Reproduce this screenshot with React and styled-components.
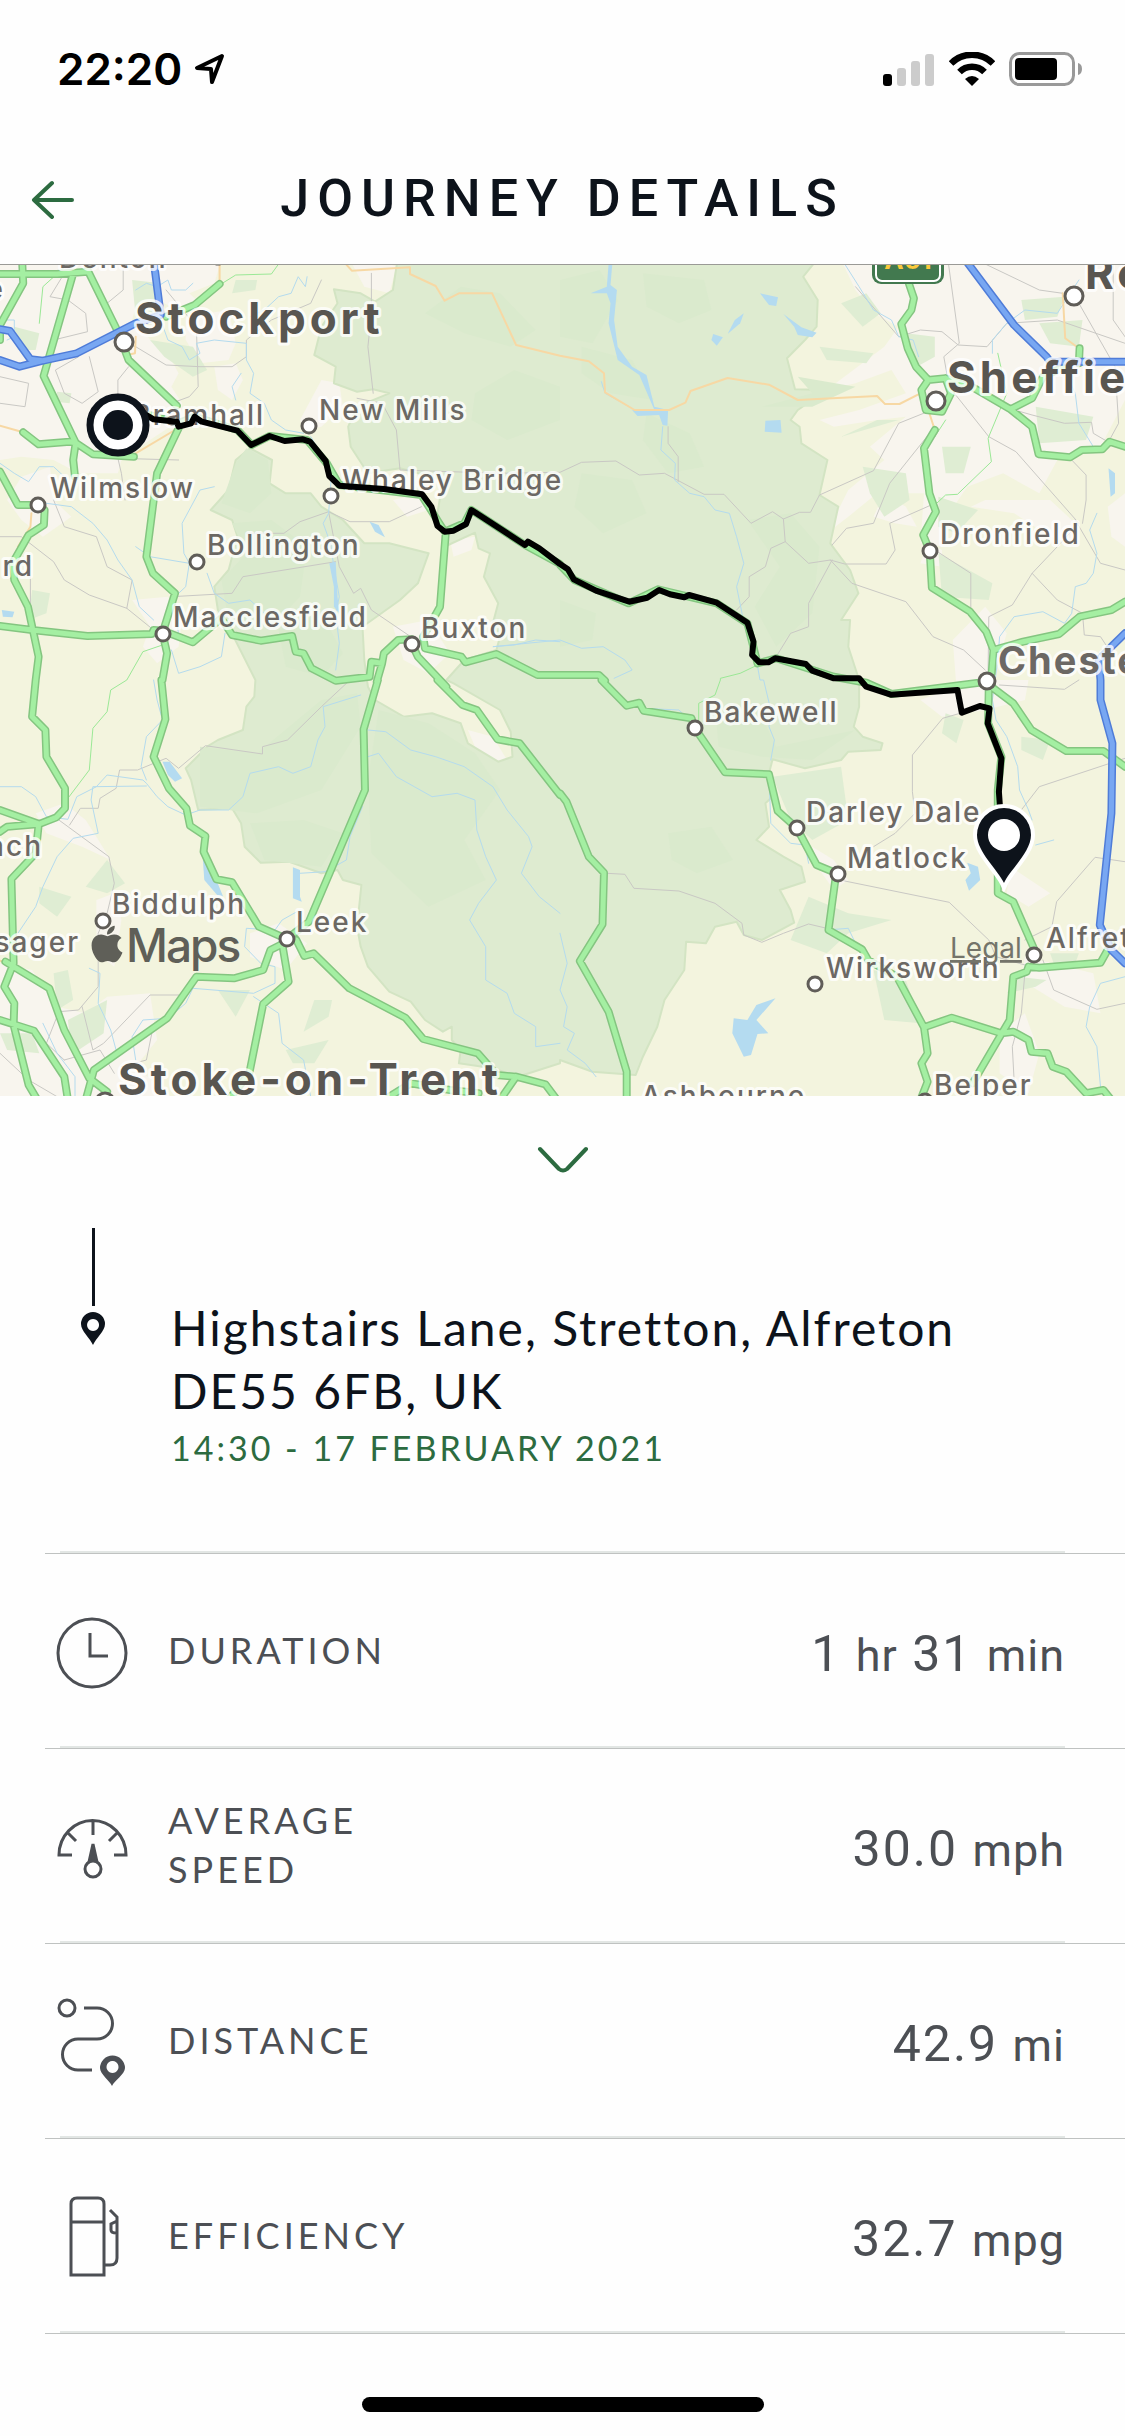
import React from 'react';
import styled, { createGlobalStyle } from 'styled-components';
import { FaApple } from 'react-icons/fa';

const color = {
  page: '#fefefe',
  ink: '#0d131b',
  body: '#4c4f54',
  green: '#2c6b40',
  hairline: '#bfc2c1',
  band: '#e2e6e4',
};

const GlobalStyle = createGlobalStyle`
  * { box-sizing: border-box; }
  body {
    margin: 0;
    background: ${color.page};
    color: ${color.ink};
    font-family: Lato, "Open Sans", sans-serif;
  }
`;

const Screen = styled.div`
  display: flex;
  flex-direction: column;
  min-height: 100vh;
`;

/* ---------- status bar ---------- */

const StatusBar = styled.div`
  display: flex;
  align-items: center;
  justify-content: space-between;
  height: 138px;
  padding: 0 42px 0 57px;
`;

const StatusGroup = styled.div`
  display: flex;
  align-items: center;
  gap: ${(p) => p.$gap}px;
`;

const Clock = styled.time`
  font: 600 44px/54px Inter, sans-serif;
  color: #000;
`;

/* ---------- header ---------- */

const Header = styled.header`
  display: grid;
  grid-template-columns: 120px 1fr 120px;
  align-items: center;
  height: 127px;
  padding-bottom: 4px;
  border-bottom: 1px solid #9a9a96;
`;

const IconButton = styled.button`
  display: flex;
  align-items: center;
  justify-content: center;
  padding: 0;
  border: 0;
  background: none;
  color: ${color.green};
  cursor: pointer;
`;

const BackButton = styled(IconButton)`
  width: 106px;
  height: 80px;
`;

const Title = styled.h1`
  margin: 0;
  text-align: center;
  font: 500 52px/60px Roboto, sans-serif;
  letter-spacing: 8px;
`;

/* ---------- map ---------- */

const MapFrame = styled.section`
  display: flex;
  background: #f3f4de;

  > svg {
    width: 100%;
    height: auto;
  }
`;

const Area = styled.path`
  fill: ${(p) => p.$fill};
  stroke: ${(p) => p.$edge || 'none'};
  stroke-width: 2;
  stroke-linejoin: round;
`;

const Way = styled.path`
  fill: none;
  stroke: ${(p) => p.$color};
  stroke-width: ${(p) => p.$width};
  stroke-linejoin: round;
  stroke-linecap: ${(p) => p.$cap || 'round'};
`;

const Place = styled.text`
  font-family: Inter, sans-serif;
  font-size: ${(p) => p.$size}px;
  font-weight: ${(p) => (p.$size > 30 ? 700 : 500)};
  letter-spacing: ${(p) => (p.$size > 40 ? 4 : 2)}px;
  fill: ${(p) => (p.$size > 40 ? '#595651' : '#6c6864')};
  stroke: rgba(255, 255, 255, 0.8);
  stroke-width: 6;
  stroke-linejoin: round;
  paint-order: stroke;
`;

const MapsMark = styled.text`
  font: 500 46px Inter, sans-serif;
  letter-spacing: -2px;
  fill: #5f5f58;
`;

const LegalText = styled.text`
  font: 400 28px Inter, sans-serif;
  fill: #74746a;
  text-decoration: underline;
  text-underline-offset: 6px;
`;

const ShieldText = styled.text`
  font: 700 26px Inter, sans-serif;
  fill: #fbc93c;
  text-anchor: middle;
`;

/*
 * The map is stored as four sheets, each with its own origin and scale.
 * A line is a list of points; a letter switches to another sheet.
 */
const sheets = {
  A: [0, 260, 1 / 2.8],
  B: [560, 260, 1 / 2.775],
  C: [0, 680, 1 / 2.8],
  D: [560, 680, 1 / 2.775],
};

const line = (points) => {
  let sheet = sheets.A;
  const out = [];
  points.trim().split(/\s+/).forEach((token) => {
    if (sheets[token]) {
      sheet = sheets[token];
      return;
    }
    const [x, y] = token.split(',').map(Number);
    out.push(`${(sheet[0] + x * sheet[2]).toFixed(1)} ${(sheet[1] + y / 3).toFixed(1)}`);
  });
  return `M${out.join('L')}`;
};

const shape = (points) => `${line(points)}Z`;

const urban = [
  'A 0,0 430,0 425,90 380,140 370,180 440,260 480,300 500,340 480,380 510,430 505,480 420,540 340,600 330,640 220,640 150,600 60,590 0,600',
  'A 430,0 620,0 600,70 530,100 560,130 500,150 440,120',
  'A 520,170 640,150 660,250 640,300 560,310 520,240',
  'A 600,320 660,310 680,360 650,420 610,390',
  'A 60,650 140,620 150,720 200,770 120,830 60,780 20,720',
  'A 370,1020 470,1010 510,1080 500,1160 440,1210 400,1160 420,1100',
  'A 1260,840 1330,830 1320,870 1270,890',
  'A 1100,1100 1200,1080 1260,1180 1200,1240 1130,1200',
  'A 900,360 950,370 960,440 900,500 850,510 840,480',
  'A 1100,720 1180,700 1200,750 1140,770',
  'A 980,0 1060,0 1110,20 1090,100 1020,80',
  'B 780,0 1120,0 1568,0 1568,420 1500,560 1380,600 1330,700 1230,640 1130,680 1080,760 1060,860 1000,850 1010,700 880,700 800,770 740,820 800,690 900,600 860,560 960,470 880,480 760,500 720,480 830,450 960,400 920,330 820,370 740,390 900,260 940,200 870,160 820,90',
  'B 1140,740 1180,720 1360,720 1420,780 1440,850 1360,830 1260,760',
  'B 900,700 960,740 990,800 930,790 870,770',
  'B 1020,850 1060,870 1060,920 1000,910',
  'B 1520,740 1568,700 1568,860 1530,830',
  'B 1090,1140 1180,1040 1240,1120 1200,1260 D 1300,0 1290,60 1180,90 1060,110 1000,60 1100,20',
  'C 100,400 180,370 240,420 270,470 310,540 230,500 130,460',
  'C 270,660 320,640 340,720 320,860 270,820',
  'C 700,760 780,730 860,790 800,870 700,830',
  'C 0,850 90,870 160,980 240,1000 300,950 420,940 440,1080 380,1160 480,1250 0,1250',
  'C 1310,150 1380,170 1420,240 1390,250 1330,200',
  'D 700,500 760,540 800,600 760,630 720,570',
  'D 1250,560 1360,640 1300,680 1240,640',
  'D 1290,830 1480,880 1500,1000 1400,980 1280,900',
  'D 1220,1060 1290,1000 1330,1120 1300,1240 1220,1180',
];

const park =
  'A 1113,0 1100,90 1050,125 1010,100 935,88 945,130 900,200 880,285 940,320 935,370 1000,395 1045,388 1090,400 1000,440 975,500 982,560 1030,640 1120,625 1240,660 1225,760 1255,855 1330,818 1340,865 1372,880 1355,950 1395,1030 1380,1090 1400,1130 1390,1170 1300,1200 1250,1260 C 1270,10 1400,90 1430,155 1435,230 1395,245 1310,190 1290,130 1210,100 1130,110 1050,60 1030,20 A 1020,1200 1015,1100 1120,1020 1170,970 1200,880 1090,850 1020,850 960,780 900,740 870,700 800,700 755,670 762,600 700,565 660,600 640,690 590,750 650,780 665,830 640,930 600,980 610,1050 640,1100 C 715,0 712,50 690,80 680,150 610,180 580,200 520,265 535,300 555,390 650,385 675,430 685,500 730,548 810,545 900,580 945,570 960,600 1012,615 1000,740 1010,800 1030,860 1090,935 1150,965 1190,1020 1240,1055 1265,1040 1265,1080 1290,1110 1285,1150 1380,1165 1450,1190 1568,1150 D 0,1140 90,1175 210,1185 230,1130 270,1040 290,960 345,870 350,785 405,790 430,740 490,725 510,765 560,780 650,728 640,690 610,630 680,605 670,560 620,530 545,480 580,440 570,370 600,340 580,280 590,238 680,265 780,240 800,215 890,210 895,190 840,170 815,140 830,80 830,0 B 800,1160 805,1080 780,1080 828,1000 805,930 750,850 772,740 720,705 742,600 670,550 665,500 640,480 660,450 740,390 652,388 630,295 680,240 712,200 715,120 675,50 712,0';

const woods = [
  'A 690,565 750,600 760,700 700,760 620,730 660,610',
  'A 650,790 760,780 860,860 840,1010 760,1100 640,1080 620,960 690,880',
  'A 1190,160 1290,80 1400,100 1500,210 1430,260 1300,220',
  'A 1330,400 1440,330 1568,380 1568,480 1420,540 1320,480',
  'A 780,1110 900,1060 960,1180 900,1250 800,1220',
  'B 0,60 110,30 160,120 90,250 0,230',
  'B 230,40 400,60 420,150 330,190 240,140',
  'B 60,260 200,300 260,420 140,400 60,340',
  'B 240,460 360,520 400,620 300,640 230,540',
  'B 60,640 200,660 240,760 120,820 40,740',
  'B 520,780 640,760 720,860 700,1060 600,1160 540,1040 610,920',
  'B 560,440 700,400 660,350 820,380 700,440',
  'B 0,1020 100,1060 90,1140 0,1160',
  'C 560,200 720,220 900,60 1000,40 1010,140 900,330 720,400 560,380',
  'C 700,430 850,420 960,460 900,560 740,540',
  'C 1060,90 1200,130 1330,220 1400,330 1300,480 1360,600 1200,680 1040,520 1030,300',
  'D 430,80 560,110 600,200 820,150 700,240 560,230 440,200',
  'D 300,460 420,440 480,540 380,580 310,540',
];

const greens = [
  'A 370,60 450,70 440,160 380,170',
  'A 40,200 110,220 100,270 50,270',
  'A 420,240 540,260 580,330 540,350 460,290',
  'A 660,60 720,60 715,90 650,100',
  'A 160,395 200,400 195,430 155,425',
  'A 90,990 140,1000 130,1060 80,1080',
  'B 780,130 850,100 890,160 840,200',
  'B 720,260 870,280 850,310 740,300',
  'B 960,220 1040,230 1040,290 990,320',
  'B 1280,120 1400,110 1380,170 1290,180',
  'B 1330,190 1450,180 1440,260 1360,250',
  'B 1060,560 1140,560 1120,640 1070,640',
  'B 1320,440 1480,470 1460,540 1330,550',
  'B 840,620 960,640 970,720 900,770 860,700',
  'B 1050,710 1160,750 1100,820 1050,800',
  'B 1050,880 1200,970 1190,1020 1060,1010',
  'B 780,530 940,480 880,480',
  'C 240,620 300,540 350,610 300,640',
  'C 110,620 200,650 160,710 110,670',
  'C 150,880 190,870 205,960 160,990',
  'C 190,1020 300,960 290,1060 220,1110 195,1070',
  'C 0,1060 90,1060 110,1120 20,1110',
  'C 610,930 700,930 660,1010',
  'C 880,960 930,960 920,1010 850,1055',
  'C 800,1110 920,1080 880,1150 820,1150',
  'D 590,290 780,260 800,420 700,480 640,420',
  'D 690,650 800,700 920,720 800,760 740,820 640,780',
  'D 870,870 960,900 1000,1030 900,1020',
  'D 1070,100 1120,120 1100,190 1060,160',
  'D 1280,170 1360,180 1340,240 1280,210',
  'D 1360,820 1440,820 1430,850 1370,850',
  'D 1270,890 1350,900 1320,920 1240,940',
];

const lakes = [
  'A 1035,785 1060,795 1078,832 1050,815',
  'A 922,910 940,905 945,1010 950,1060 935,1040 935,980',
  'A 5,1050 40,1055 35,1072 8,1070',
  'B 135,12 130,80 85,100 130,100 140,130 135,190 160,300 220,345 262,450 200,450 215,468 275,465 285,495 298,497 300,450 262,440 240,345 200,320 160,260 150,180 158,90 140,75 145,12',
  'B 555,100 605,112 600,138 580,135',
  'B 510,160 500,190 465,222 485,180',
  'B 620,162 670,202 712,218 700,232 660,225 650,200',
  'B 425,222 452,232 435,257 420,240',
  'B 570,482 612,480 615,518 568,515',
  'B 1522,625 1540,640 1540,700 1528,710',
  'C 455,245 475,245 510,295 490,305 470,285',
  'C 568,540 585,545 625,650 608,645 572,600',
  'C 820,562 840,570 840,650 845,665 820,655',
  'D 598,955 545,1020 578,1060 548,1062 530,1125 510,1130 478,1060 482,1015 520,1020 545,975',
  'D 1130,548 1160,560 1166,600 1135,632 1125,600 1140,580',
];

const streams = [
  'A 860,50 855,80 835,50 815,100 780,110 740,150 700,170',
  'A 380,90 410,70 440,80 470,60 480,90 520,90 540,70',
  'A 450,180 470,240 510,260 530,300 560,280 550,250 600,240 690,250 690,300 710,340 700,400 740,430 760,480 800,510 850,520',
  'A 870,530 900,580 930,620 920,760 905,790 925,850 935,920 950,1010 940,1060 950,1150 940,1230',
  'A 675,340 650,380 660,420',
  'A 0,610 40,640 80,665 110,620 150,620 180,650',
  'A 130,730 200,740 260,790 300,840 330,900 370,960 390,1040 430,1080',
  'A 600,680 560,690 510,790 515,880 530,910 420,890 380,860',
  'A 580,940 600,1000 640,1030 700,1020 740,1060',
  'A 530,910 520,980 490,1010 500,1130',
  'A 630,1120 620,1190 560,1220 500,1240 480,1170',
  'A 0,180 40,180 40,230 20,240',
  'B 790,12 830,80 870,150 920,180 940,230 980,240 995,290',
  'B 285,500 280,570 320,610 318,660 360,700 400,710 430,750 470,760 490,830 510,910 490,980 505,1060 520,1130 545,1200 555,1260 D 565,0 585,90 580,140 595,180 585,240',
  'B 115,365 125,400 200,445',
  'B 1400,330 1430,400 1440,490 1480,560',
  'B 1200,280 1200,240 1240,190 1290,150 1380,160 1440,60',
  'B 1490,760 1470,810 1490,880 1480,940 1460,970 1430,980 1420,1060 1400,1090 1340,1055 1260,1070 1220,1130 1215,1200 D 1200,60 1210,120 1240,170 1270,260 1275,330 1300,390 1310,420',
  'A 1568,1145 1500,1140 1440,1155 1380,1160 B 0,1140 60,1165 120,1160 180,1200 200,1230 150,1255',
  'C 0,320 60,320 100,350 130,410 190,418 215,350 270,320 300,285 400,300 410,310 440,350 470,380 520,405 560,390 640,390 680,350 700,280 780,260 820,280 870,260 890,180 910,140 905,80 1010,45',
  'C 430,0 440,60 455,120 410,170 395,260 410,300',
  'C 410,318 260,320 255,360 275,460 205,475 160,530 120,620 100,680 50,760',
  'C 1030,150 1080,155 1150,210 1220,230 1300,260 1380,320 1420,390 1480,470 1490,500 1460,580 1510,650 1568,700',
  'C 1030,230 1060,220 1110,290 1160,320 1210,350 1280,340 1330,360 1335,450 1360,530 1390,600 1340,670 1315,720 1360,800 1360,900 1420,940 1440,1000 1500,1040 1500,1100 1568,1090',
  'C 1015,380 980,470 970,540 910,575 840,580',
  'C 840,690 790,720 770,750 690,745 685,800 730,850 770,860 770,910 710,940 540,925 520,970 470,1015 400,1020 370,1070 380,1140',
  'C 250,865 280,880 275,970 310,1050 330,1130',
  'C 120,1030 160,1120 210,1190 210,1250',
  'C 710,950 780,1000 790,1090 850,1140 870,1250',
  'D 580,290 585,430 640,490 680,495 690,550',
  'D 740,750 800,745 820,790 860,840',
  'D 940,910 970,980 1000,1040',
  'D 0,760 20,850 0,930 20,980 10,1040 40,1060 20,1110 70,1150 100,1190',
  'D 1568,890 1500,910 1470,980 1460,1040 1490,1100 1500,1220',
  'D 1320,495 1370,480',
  'D 230,85 330,90 370,130',
];

const lanes = [
  'A 180,40 140,110 190,120 240,160 245,215 150,240',
  'A 345,30 345,90 300,130 250,60',
  'A 350,250 380,260 465,315 560,320 650,320 690,290 690,240 760,180 870,130 900,60',
  'A 465,90 550,200 555,380 530,410 480,430',
  'A 250,290 275,395 230,430 180,400 155,330 220,290',
  'A 360,320 330,360 330,420',
  'A 0,350 80,370 70,440 0,430',
  'A 500,600 330,595 340,640 350,720',
  'A 1040,40 1040,160 1030,260 1045,400',
  'A 1000,415 1070,430 1110,510 1120,630 1400,640 B 0,637 60,607 155,603 220,645 290,640 400,703 455,703 530,790 590,755 620,777 665,757 695,757 720,705 870,632 940,490 1020,455',
  'A 1180,740 1090,785 980,785 920,755 840,785 795,820 690,820',
  'A 920,755 950,920 990,1000 1010,985 1040,1050 1150,1130',
  'A 940,905 680,950 650,1000 480,1010',
  'A 150,720 180,800 270,830 300,920 370,960 355,1045 430,1110',
  'A 0,830 60,830 150,905 180,960 250,1005 355,1045',
  'A 85,900 85,1080',
  'B 300,500 300,550 328,590 328,665',
  'B 620,777 625,845 690,910 750,900 810,970 960,1025 1035,1130 1120,1170 1180,1230',
  'B 625,845 585,865 570,920 525,950 525,1010 490,1050',
  'B 755,900 690,1030 690,1100 640,1120 600,1190',
  'B 750,900 790,912 905,912 930,870 915,790 1030,735',
  'B 755,855 795,805 870,790 915,670 1040,500',
  'B 820,80 940,230 1000,210 1060,215 1105,255 1185,260 1240,190 1380,180 1568,250',
  'B 1078,12 1108,250 1065,290 1080,380 1190,530 1265,575 1440,790 1380,860 1310,940 1255,1035 1190,1070 1188,1230',
  'B 1310,940 1380,1020 1450,1060 1455,1125 1500,1130 1530,1180',
  'B 1040,870 1140,940 1140,1050',
  'B 1180,12 1330,90 1395,100 1440,130 1540,320 1550,490 1525,540',
  'B 1535,12 1535,180 1568,230',
  'B 1420,600 1460,645 1460,720 1450,790',
  'B 1230,440 1310,465 1400,490 1475,487 1480,520 1520,545',
  'B 1430,780 1500,910 1568,930',
  'C 980,0 900,80 805,180 735,200 735,222 575,197 500,265 465,235 385,270 335,270 325,325 280,355 275,385 225,385 195,435',
  'C 165,420 305,530 320,610 300,700 275,760 275,920 220,990 165,995 130,1090 180,1140',
  'C 500,945 420,945 290,1090 260,1110 230,980',
  'C 425,1060 410,1140 340,1160',
  'C 180,1140 280,1110 320,1180',
  'C 0,1120 80,1200 160,1250',
  'D 130,580 180,583 205,625 330,633 430,670 505,730 510,765 560,787 620,760 690,732 740,745',
  'D 1110,100 1062,115 978,225 978,335 985,400 930,460 870,500',
  'D 790,603 1080,667 1190,780 1210,830 1290,855',
  'D 1568,235 1330,320 1280,390',
  'D 1568,545 1485,532 1378,665 1365,740 1290,780',
  'D 1340,840 1370,930 1490,988 1568,970',
  'D 1290,880 1280,1000 1255,1100 1260,1200',
  'D 1220,15 1400,28 1440,0',
];

const greenLanes = [
  'A 190,12 120,80 110,190',
  'A 615,75 660,45 760,42 780,12',
  'B 1070,480 1040,530',
  'B 1215,280 1240,400 1188,535 1197,605 1103,703 1070,705 1040,735',
  'B 548,1215 500,1240 445,1255 D 445,0 430,45 385,70 385,140',
  'A 455,1155 400,1175 355,1260 C 310,30 300,95 260,145 250,270 190,355',
];

const tracks = [
  'A 950,-10 985,32 1148,22 1148,42 1220,78 1245,122 1285,100 1378,100 1445,255 1568,287 B 0,287 80,304 122,340 125,397 207,450 303,450 348,428 362,393 465,354 580,374 660,420 880,408 902,432 942,432 1000,400',
  'A 615,0 615,70',
  'A 380,580 490,510',
  'A 0,497 65,517',
  'A 88,760 85,800 50,860',
  'A 380,230 378,280 355,285',
  'B 1025,460 1040,510',
  'B 1395,100 1402,235 1440,265',
  'C 0,842 20,848',
];

const primaries = [
  'A 0,42 160,42 245,35',
  'A 62,0 65,70 0,195 0,240',
  'A 205,40 122,348 212,548 205,600 210,650',
  'A 245,30 330,215 360,300 495,437',
  'A 615,72 545,135 465,170',
  'A 65,517 108,553 195,545 212,548 260,583 375,590',
  'A 500,505 440,640 410,890 428,940 490,1000 455,1120 468,1180 455,1260 C 452,0 463,118 430,230 473,325 522,385 532,437 575,468 570,515 606,598 650,607 725,740 803,777',
  'A 0,635 50,735 106,735 125,750 123,795 80,825 35,910 40,960 78,1040 108,1190 100,1260 C 90,110 127,150 130,230 182,325 182,385 158,412 110,432 0,390',
  'A 0,1098 90,1110 245,1128 425,1122 430,1110 456,1112 540,1147 620,1075 650,1125 730,1142 818,1128 828,1175 850,1180 872,1225 940,1262 1035,1250 1040,1205 1070,1210 1075,1180 1115,1140 1153,1138',
  'A 1248,820 1232,1040 1185,1130 1190,1165 1292,1190 1303,1207 1390,1182 1505,1245 B 0,1245 108,1245 125,1262 D 115,0 185,77 220,68 232,92 365,115 374,144 458,277 580,283 604,393 657,444 712,555 771,581',
  'A 1153,1151 1170,1190 1250,1280 C 1225,0 1295,75 1335,90 1393,178 1455,190 1568,345 D 0,340 18,365 80,530 122,578 118,733 55,843 135,995 185,1175 185,1260',
  'A 1070,1210 1055,1265 C 1058,0 1018,148 1022,330 865,725 803,777',
  'A 420,465 500,490 545,470 665,510 705,555 755,528 860,540 915,610 950,675 1180,705 1245,815 1300,790 1320,750 1470,855 1568,912 B 0,915 40,960 190,1030 272,988 435,1030 520,1090 548,1210 600,1195 760,1250 D 850,8 920,42 1184,5',
  'B 968,70 982,115 975,150 947,192 965,265 988,320 1022,360 1003,390 1015,450 1060,455 1085,400 1070,355 1022,360',
  'B 1070,355 1150,385 1250,448 1310,415 1340,350 1400,320',
  'B 1250,448 1310,500 1328,583 1415,592 1448,570 1505,568 1525,545 1568,560',
  'B 1442,265 1440,310',
  'B 1040,510 1010,565 1025,700 1043,755 1008,825 1026,872 1032,983 1138,1055 1183,1115 1203,1170 1198,1240',
  'B 1203,1170 1285,1145 1385,1122 1442,1070 1530,1050 1568,1025',
  'D 1184,10 1258,70 1308,150 1405,213 1508,213 1568,260',
  'D 1190,20 1188,130 1225,230 1215,330 1215,640 1258,665 1317,810',
  'D 764,600 745,750 838,808 855,840 935,890 1010,1042 1020,1120 1003,1150 1020,1205 1000,1260',
  'D 1010,1042 1087,1013 1225,1060 1258,1055 1300,1080 1308,1115 1353,1120 1367,1160 1405,1175 1460,1240 1508,1230 1530,1260',
  'D 1300,860 1330,863 1500,848 1530,790',
  'D 1300,860 1295,875 1258,890 1248,1020 1225,1062 1145,1210',
  'C 0,455 20,440 110,432',
  'C 108,435 100,520 32,597 38,850 12,920 40,970 38,1035 80,1215 105,1260',
  'C 15,845 138,925 180,1050 250,1195 300,1235',
  'C 0,1020 95,1052 180,1190 190,1260',
  'C 240,1260 263,1170 468,1015 550,890 655,895 737,870 757,810 803,785',
  'C 790,790 808,905 737,972 698,1180 640,1260',
  'C 830,780 852,828 878,820 978,925 1135,1013 1185,1077 1338,1120 1375,1165 1390,1185 1445,1190 1527,1213 1560,1260',
  'C 1445,1190 1400,1260',
  'C 1090,1250 1150,1210 1260,1230 1340,1240',
];

const motorways = [
  'A 430,0 450,165 380,190 215,280 120,302 85,298 28,213 0,208',
  'A 0,300 55,320 120,302',
  'B 1125,0 1260,195 1350,290 1360,305 1568,305',
  'B 1568,1120 1530,1160 1495,1200 1500,1260 D 1500,60 1533,190 1530,400 1498,735 1530,810 1568,850',
];

const route =
  'A 405,462 430,478 495,485 500,500 535,490 545,470 565,485 665,512 703,555 755,528 797,543 848,538 868,545 912,603 922,648 950,677 1075,687 1182,703 1208,740 1225,798 1245,815 1270,812 1305,792 1320,750 1470,855 1478,845 1510,865 1568,912 B 0,912 22,928 38,958 100,992 192,1025 242,1013 275,990 305,1003 345,1012 358,1005 435,1028 520,1088 537,1145 533,1185 553,1207 578,1207 597,1195 682,1212 700,1232 760,1255 830,1255 D 850,20 918,44 1103,30 1115,98 1165,78 1192,85 1187,130 1225,235 1218,335 1222,400';

const towns = [
  [218, 256, 9], [124, 342, 10], [38, 505, 8], [309, 426, 8], [331, 496, 8], [197, 562, 8],
  [163, 634, 8], [412, 644, 8], [1074, 296, 10], [936, 401, 10], [930, 551, 8], [987, 681, 9],
  [695, 728, 8], [797, 828, 8], [838, 874, 8], [815, 984, 8], [1034, 955, 8], [103, 921, 8],
  [287, 939, 8], [105, 1102, 10], [925, 1101, 8],
];

const places = [
  ['Denton', 59, 268, 28],
  ['e', 5, 299, 28, 'end'],
  ['Stockport', 135, 334, 44],
  ['Bramhall', 265, 425, 28, 'end'],
  ['Wilmslow', 50, 498, 28],
  ['rd', 34, 576, 28, 'end'],
  ['New Mills', 319, 420, 28],
  ['Whaley Bridge', 342, 490, 28],
  ['Bollington', 207, 555, 28],
  ['Macclesfield', 173, 627, 28],
  ['Buxton', 421, 638, 28],
  ['Rotherham', 1085, 289, 44],
  ['Sheffield', 947, 393, 44],
  ['Dronfield', 940, 544, 28],
  ['Chesterfield', 998, 674, 38],
  ['Bakewell', 704, 722, 28],
  ['Darley Dale', 806, 822, 28],
  ['Matlock', 847, 868, 28],
  ['Wirksworth', 826, 978, 28],
  ['Alfreton', 1046, 948, 28],
  ['Belper', 934, 1095, 28],
  ['Ashbourne', 641, 1106, 28],
  ['Biddulph', 112, 914, 28],
  ['Leek', 296, 932, 28],
  ['ach', 43, 856, 28, 'end'],
  ['sager', 80, 952, 28, 'end'],
  ['Stoke-on-Trent', 118, 1095, 44],
];

function JourneyMap() {
  const greenWays = primaries.map(line).join('');
  const blueWays = motorways.map(line).join('');
  return (
    <svg viewBox="0 265 1125 831" role="img" aria-label="Route from Bramhall to Alfreton">
      {urban.map((p) => <Area key={p} d={shape(p)} $fill="#f8f5ee" />)}
      <Area d={shape(park)} $fill="#deebd0" $edge="#d3e4c3" />
      {woods.map((p) => <Area key={p} d={shape(p)} $fill="#daeacd" />)}
      {greens.map((p) => <Area key={p} d={shape(p)} $fill="#dfedd3" />)}
      <Way d={lanes.map(line).join('')} $color="#c9c8c4" $width={1} />
      <Way d={greenLanes.map(line).join('')} $color="#9be896" $width={1} />
      <Way d={streams.map(line).join('')} $color="#b4dbee" $width={1} />
      {lakes.map((p) => <Area key={p} d={shape(p)} $fill="#b4dbf0" />)}
      <Way d={tracks.map(line).join('')} $color="#f7d8a4" $width={2} />
      <Way d={greenWays} $color="#84c580" $width={8} />
      <Way d={greenWays} $color="#a4efa2" $width={5} />
      <Way d={blueWays} $color="#4f7cd8" $width={8} />
      <Way d={blueWays} $color="#78a7f2" $width={5} />

      <rect x="872" y="230" width="72" height="54" rx="9" fill="#42794f" />
      <rect x="876" y="230" width="64" height="51" rx="6" fill="#42794f" stroke="#fff" strokeWidth="2" />
      <ShieldText x="908" y="269">A61</ShieldText>

      {places.map(([name, x, y, size, anchor]) => (
        <Place key={name} x={x} y={y} $size={size} textAnchor={anchor || 'start'}>{name}</Place>
      ))}
      {towns.map(([x, y, r]) => (
        <circle key={`${x}-${y}`} cx={x} cy={y} r={r - 1} fill="#fff" stroke="#605d58" strokeWidth="3" />
      ))}

      <FaApple x="86" y="923" size={42} color="#5f5f58" />
      <MapsMark x="126" y="962">Maps</MapsMark>
      <a href="#legal"><LegalText x="950" y="958">Legal</LegalText></a>

      <Way d={line(route)} $color="#000" $width={6} $cap="butt" />
      <circle cx="118" cy="425" r="28" fill="#fff" stroke={color.ink} strokeWidth="7" />
      <circle cx="118" cy="425" r="15" fill={color.ink} />
      <path
        d="M1004 883C998 870 977 852 977 835a27 27 0 0 1 54 0C1031 852 1010 870 1004 883Z"
        fill={color.ink}
        stroke="#fff"
        strokeWidth="8"
        paintOrder="stroke"
      />
      <circle cx="1004" cy="835" r="16" fill="#fff" />
    </svg>
  );
}

/* ---------- journey sheet ---------- */

const Sheet = styled.main`
  display: flex;
  flex-direction: column;
`;

const CollapseButton = styled(IconButton)`
  align-self: center;
  width: 120px;
  height: 128px;
`;

const Stop = styled.section`
  display: grid;
  grid-template-columns: 66px 1fr;
  column-gap: 45px;
  margin: 4px 60px 0;
  padding-bottom: 79px;
`;

const StopRail = styled.div`
  display: flex;
  flex-direction: column;
  align-items: center;
  gap: 6px;
`;

const RailLine = styled.span`
  width: 3px;
  height: 78px;
  background: ${color.ink};
`;

const StopText = styled.div`
  padding-top: 68px;
`;

const Address = styled.address`
  font-style: normal;
  font-size: 48px;
  line-height: 63px;
  letter-spacing: 2px;
`;

const StopTime = styled.p`
  margin: 2px 0 0;
  color: ${color.green};
  font-size: 34px;
  line-height: 48px;
  letter-spacing: 3px;
`;

const Stats = styled.dl`
  margin: 0 0 0 45px;
  border-top: 1px solid ${color.hairline};
`;

const StatsLead = styled.div`
  margin: 0 60px 0 60px;
  height: 2px;
  background: ${color.band};
`;

const Stat = styled.div`
  border-bottom: 1px solid ${color.hairline};
`;

const StatBody = styled.div`
  display: grid;
  grid-template-columns: 66px 1fr auto;
  align-items: center;
  column-gap: 42px;
  height: 194px;
  margin: 0 60px 0 15px;
  border-bottom: 2px solid ${color.band};
`;

const StatIcon = styled.svg`
  width: 72px;
  height: 96px;
  margin-left: -4px;
  fill: none;
  stroke: ${color.body};
  stroke-width: 3;
`;

const StatLabel = styled.dt`
  max-width: 260px;
  color: ${color.body};
  font-size: 36px;
  line-height: 49px;
  letter-spacing: 4px;
`;

const StatValue = styled.dd`
  margin: 0;
  padding-top: 9px;
  color: ${color.body};
  font: 400 50px/60px Roboto, sans-serif;
  letter-spacing: 2px;
`;

const Unit = styled.span`
  font-size: 45px;
  letter-spacing: 1px;
`;

const HomeArea = styled.footer`
  display: flex;
  justify-content: center;
  padding: 63px 0 24px;
`;

const HomeIndicator = styled.span`
  width: 402px;
  height: 15px;
  border-radius: 8px;
  background: #000;
`;

const icons = {
  duration: (
    <>
      <circle cx="36" cy="49" r="34" />
      <path d="M34 29v23h18" />
    </>
  ),
  speed: (
    <>
      <path d="M16 56H3a33 34 0 0 1 67 0H58M37 23v13M11 33l9 9M62 33l-9 9" />
      <path d="M37 45l4 18h-8z" fill={color.body} />
      <circle cx="37" cy="70" r="8" fill={color.page} />
    </>
  ),
  distance: (
    <>
      <circle cx="11" cy="14" r="8" />
      <path d="M28 14h13a15 15 0 0 1 0 31H22a15 15 0 0 0 0 31h14" />
      <path
        d="M56 92C54 87 44 80 44 74a12 12 0 0 1 25 0C69 80 58 87 56 92ZM56 67a6 6 0 1 0 1 0Z"
        fill={color.body}
        fillRule="evenodd"
        stroke="none"
      />
    </>
  ),
  efficiency: (
    <>
      <path d="M15 86V15q0-6 6-6h21q6 0 6 6V86ZM15 33h33" />
      <path d="M49 76h5q7 0 7-7V28l-7-7M61 32l-6 3v6q0 3 6 3" />
    </>
  ),
};

const stats = [
  { icon: 'duration', label: 'DURATION', value: [['1', 'hr'], ['31', 'min']] },
  { icon: 'speed', label: 'AVERAGE SPEED', value: [['30.0', 'mph']] },
  { icon: 'distance', label: 'DISTANCE', value: [['42.9', 'mi']] },
  { icon: 'efficiency', label: 'EFFICIENCY', value: [['32.7', 'mpg']] },
];

export default function App() {
  return (
    <Screen>
      <GlobalStyle />
      <StatusBar>
        <StatusGroup $gap={12}>
          <Clock>22:20</Clock>
          <svg width="32" height="32" viewBox="0 0 32 32" fill="none" stroke="#000" strokeWidth="4" strokeLinejoin="round" aria-hidden="true">
            <path d="M28 3L3 15l14 1 1 13Z" />
          </svg>
        </StatusGroup>
        <StatusGroup $gap={14}>
          <svg width="52" height="34" viewBox="0 0 52 34" aria-hidden="true">
            <rect x="0" y="22" width="9" height="12" rx="3" fill="#000" />
            <rect x="14" y="16" width="9" height="18" rx="3" fill="#ccc" />
            <rect x="28" y="9" width="9" height="25" rx="3" fill="#ccc" />
            <rect x="42" y="2" width="9" height="32" rx="3" fill="#ccc" />
          </svg>
          <svg width="46" height="34" viewBox="0 0 46 34" fill="none" stroke="#000" strokeWidth="6.5" aria-hidden="true">
            <path d="M2 11.500a29.500 29.500 0 0 1 42 0" />
            <path d="M10.500 20a17.500 17.500 0 0 1 25 0" />
            <path d="M16 27q7-6 14 0l-7 7z" fill="#000" stroke="none" />
          </svg>
          <svg width="74" height="34" viewBox="0 0 74 34" aria-hidden="true">
            <rect x="1.500" y="1.500" width="63" height="31" rx="9" fill="none" stroke="#999" strokeWidth="3" />
            <rect x="6" y="6" width="42" height="22" rx="4" fill="#000" />
            <path d="M69 11q4 1 4 6t-4 6z" fill="#999" />
          </svg>
        </StatusGroup>
      </StatusBar>

      <Header>
        <BackButton type="button" aria-label="Back">
          <svg width="44" height="40" viewBox="0 0 44 40" fill="none" stroke="currentColor" strokeWidth="4" strokeLinecap="round" strokeLinejoin="round">
            <path d="M41 21H3M21 4L3 21l18 17" />
          </svg>
        </BackButton>
        <Title>JOURNEY DETAILS</Title>
      </Header>

      <MapFrame>
        <JourneyMap />
      </MapFrame>

      <Sheet>
        <CollapseButton type="button" aria-label="Collapse details">
          <svg width="52" height="28" viewBox="0 0 52 28" fill="none" stroke="currentColor" strokeWidth="4" strokeLinecap="round" strokeLinejoin="round">
            <path d="M3 3l19 20q4 3 8 0L49 3" />
          </svg>
        </CollapseButton>

        <Stop>
          <StopRail>
            <RailLine />
            <svg width="24" height="34" viewBox="0 0 24 34" fill={color.ink} aria-hidden="true">
              <path fillRule="evenodd" d="M12 33C9 26 0 19 0 12a12 12 0 0 1 24 0C24 19 15 26 12 33ZM12 7a6 6 0 1 0 .1 0Z" />
            </svg>
          </StopRail>
          <StopText>
            <Address>
              Highstairs Lane, Stretton, Alfreton
              <br />
              DE55 6FB, UK
            </Address>
            <StopTime>14:30 - 17 FEBRUARY 2021</StopTime>
          </StopText>
        </Stop>

        <StatsLead />
        <Stats>
          {stats.map(({ icon, label, value }) => (
            <Stat key={icon}>
              <StatBody>
                <StatIcon viewBox="0 -2 72 96" aria-hidden="true">{icons[icon]}</StatIcon>
                <StatLabel>{label}</StatLabel>
                <StatValue>
                  {value.map(([amount, unit], i) => (
                    <React.Fragment key={unit}>
                      {i > 0 && ' '}
                      {amount} <Unit>{unit}</Unit>
                    </React.Fragment>
                  ))}
                </StatValue>
              </StatBody>
            </Stat>
          ))}
        </Stats>
      </Sheet>

      <HomeArea>
        <HomeIndicator />
      </HomeArea>
    </Screen>
  );
}
